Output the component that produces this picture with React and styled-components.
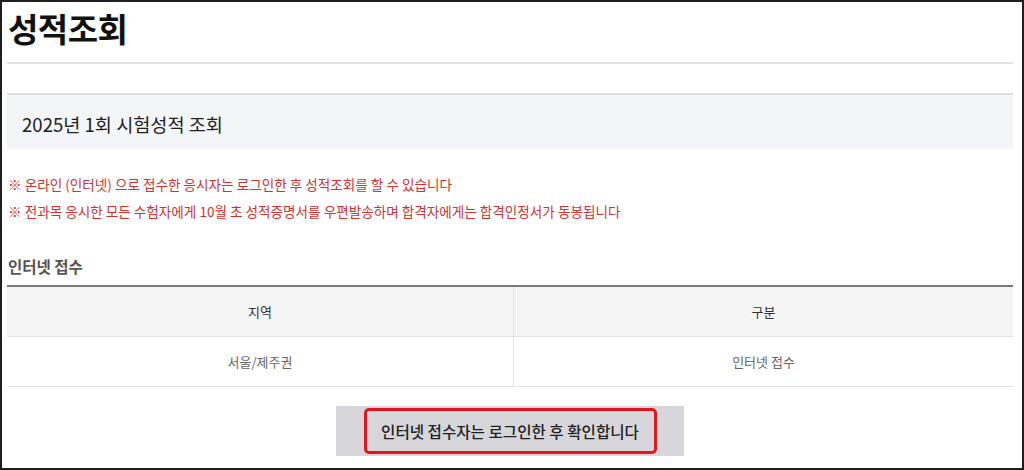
import React from "react";
import styled, { createGlobalStyle } from "styled-components";

const Global = createGlobalStyle`
  html, body { margin: 0; padding: 0; background: #fff; }
  body { font-family: "Noto Sans CJK KR", "Noto Sans", sans-serif; }
  * { box-sizing: border-box; }
`;

const Frame = styled.div`
  width: 1024px;
  height: 470px;
  border: 2px solid #1e1e1e;
  padding: 4px 9px 0 5px;
  overflow: hidden;
  background: #fff;
`;

const Title = styled.h1`
  margin: 0 0 12px 1px;
  font-size: 33px;
  line-height: 44px;
  font-weight: 700;
  color: #111;
  letter-spacing: -0.5px;
`;

const Divider = styled.div`
  height: 2px;
  background: #e3e3e3;
`;

const ExamBox = styled.div`
  margin-top: 29px;
  border-top: 2px solid #dcdcdc;
  background: #f3f5f8;
  padding: 4px 15px 0;
  height: 56px;
  font-size: 18.6px;
  line-height: 50px;
  color: #222;
`;

const Notes = styled.div`
  margin-top: 22px;
  display: flex;
  flex-direction: column;
`;

const Note = styled.p`
  margin: 0 0 0 1px;
  font-size: 13.6px;
  line-height: 27px;
  color: #d62f2f;
`;

const SubHeading = styled.h2`
  margin: 29px 0 0 1px;
  font-size: 15.5px;
  line-height: 24px;
  font-weight: 700;
  color: #555;
`;

const Table = styled.div`
  margin-top: 7px;
  border-top: 2px solid #7a7a7a;
  display: grid;
  grid-template-columns: 507px 1fr;
`;

const Cell = styled.div`
  height: 50px;
  display: flex;
  align-items: center;
  justify-content: center;
  font-size: 13px;
  border-bottom: 1px solid #e2e2e2;
  border-right: ${(p) => (p.$last ? "none" : "1px solid #e2e2e2")};
  background: ${(p) => (p.$head ? "#f5f5f5" : "#fff")};
  color: ${(p) => (p.$head ? "#333" : "#666")};
`;

const ButtonRow = styled.div`
  margin-top: 19px;
  display: flex;
  justify-content: center;
`;

const GrayButton = styled.button`
  width: 348px;
  height: 50px;
  border: none;
  background: #d6d6db;
  display: flex;
  align-items: center;
  justify-content: center;
  padding: 0;
  font-family: inherit;
  cursor: pointer;
`;

const Highlight = styled.span`
  width: 293px;
  height: 46px;
  border: 3px solid #e5141c;
  border-radius: 5px;
  display: flex;
  align-items: center;
  justify-content: center;
  font-size: 15.6px;
  font-weight: 500;
  color: #222;
`;

export default function App() {
  return (
    <>
      <Global />
      <Frame>
        <Title>성적조회</Title>
        <Divider />
        <ExamBox>2025년 1회 시험성적 조회</ExamBox>
        <Notes>
          <Note>※ 온라인 (인터넷) 으로 접수한 응시자는 로그인한 후 성적조회를 할 수 있습니다</Note>
          <Note>※ 전과목 응시한 모든 수험자에게 10월 초 성적증명서를 우편발송하며 합격자에게는 합격인정서가 동봉됩니다</Note>
        </Notes>
        <SubHeading>인터넷 접수</SubHeading>
        <Table>
          <Cell $head>지역</Cell>
          <Cell $head $last>구분</Cell>
          <Cell>서울/제주권</Cell>
          <Cell $last>인터넷 접수</Cell>
        </Table>
        <ButtonRow>
          <GrayButton>
            <Highlight>인터넷 접수자는 로그인한 후 확인합니다</Highlight>
          </GrayButton>
        </ButtonRow>
      </Frame>
    </>
  );
}
